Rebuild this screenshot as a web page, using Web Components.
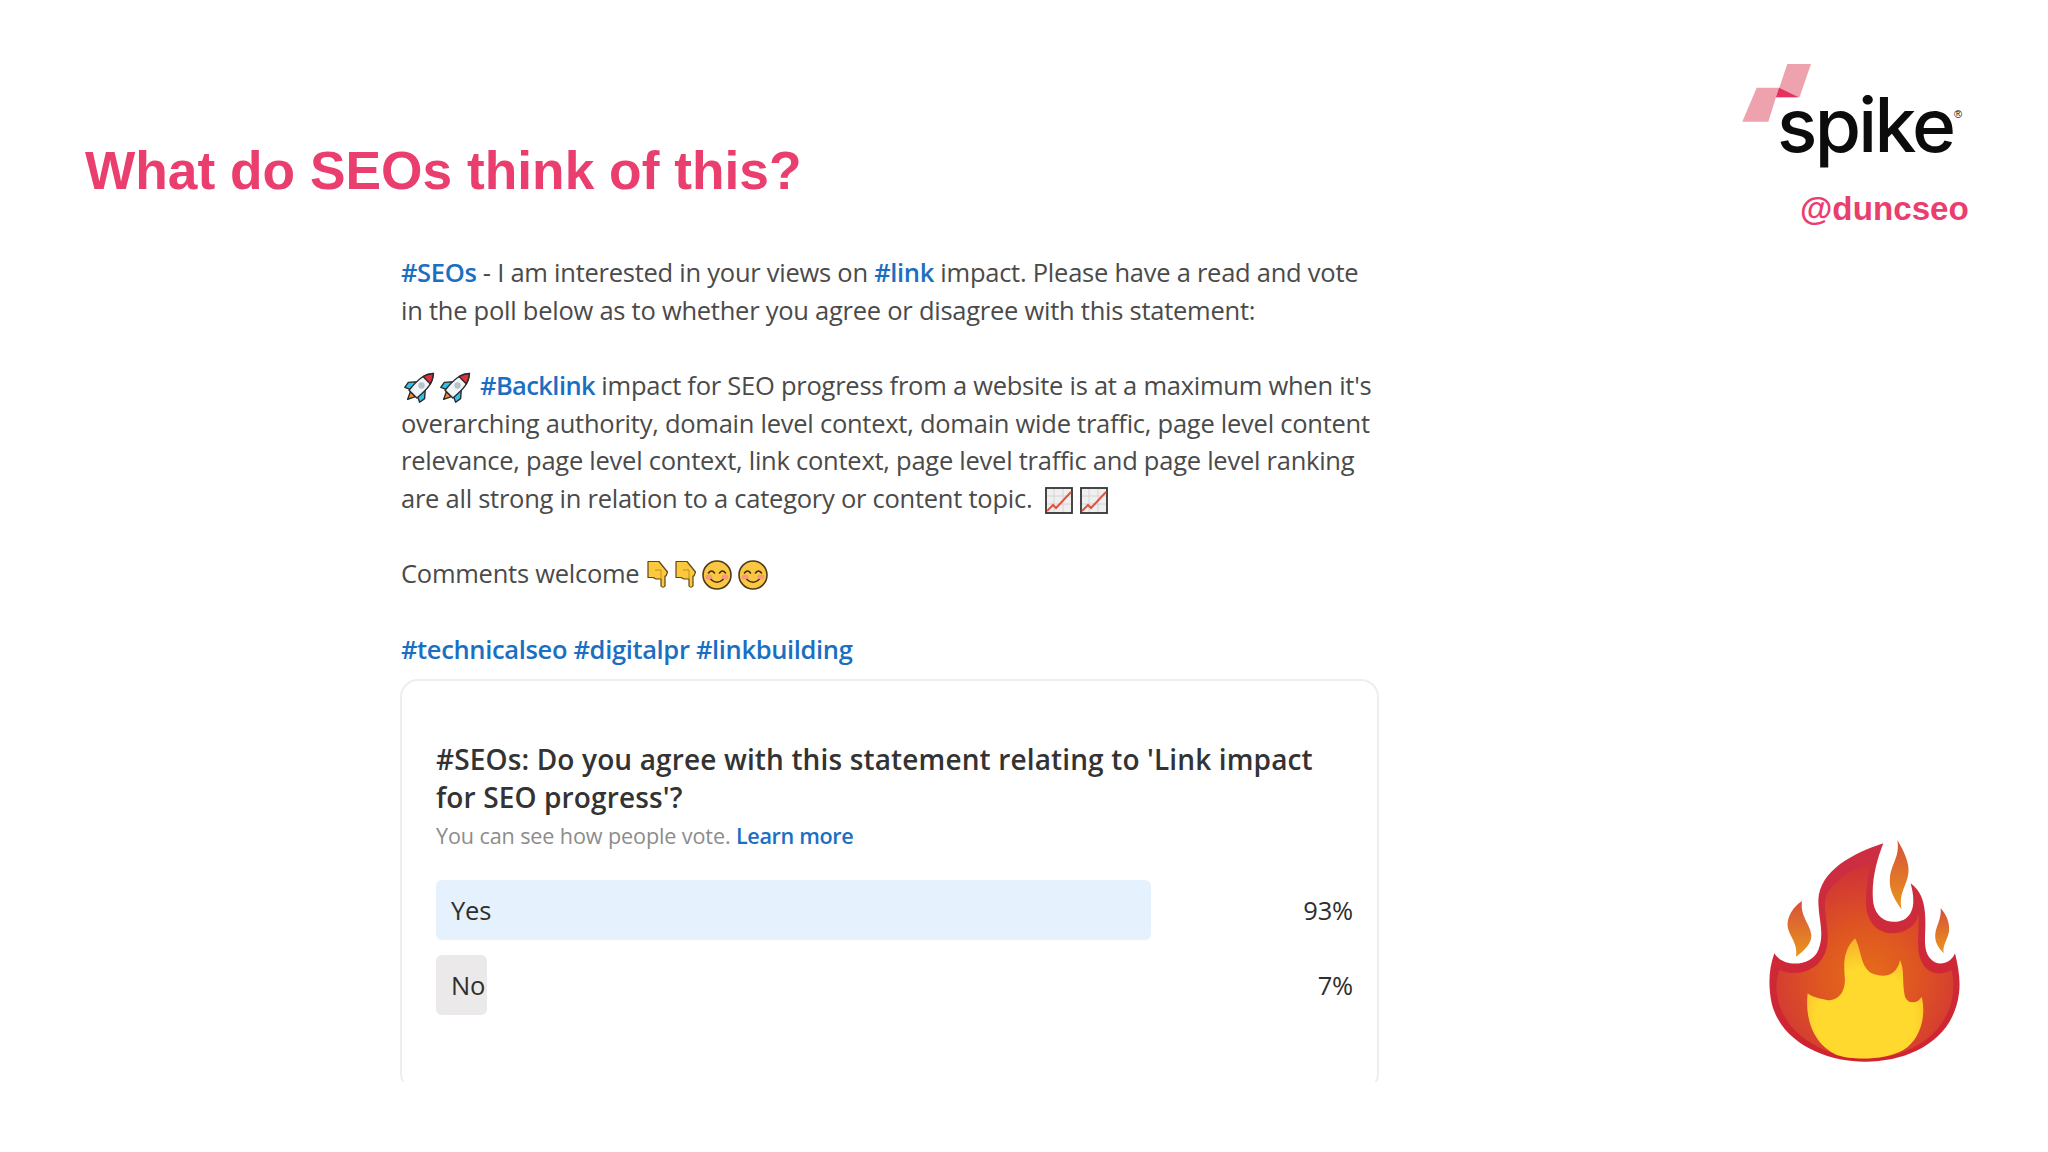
<!DOCTYPE html>
<html>
<head>
<meta charset="utf-8">
<title>What do SEOs think of this?</title>
<style>
	html, body { margin: 0; padding: 0; background: #fff; }
</style>
</head>
<body>
<seo-slide>
	<span slot="title">What do SEOs think of this?</span>
	<spike-brand slot="brand"></spike-brand>
	<seo-post slot="post">
		<hash-tag>#SEOs</hash-tag> - I am interested in your views on <hash-tag>#link</hash-tag> impact. Please have a read and vote<br>
		in the poll below as to whether you agree or disagree with this statement:<br>
		<br>
		<post-emoji name="rocket"></post-emoji><post-emoji name="rocket"></post-emoji><hash-tag class="lead">#Backlink</hash-tag> impact for SEO progress from a website is at a maximum when it's<br>
		overarching authority, domain level context, domain wide traffic, page level content<br>
		relevance, page level context, link context, page level traffic and page level ranking<br>
		are all strong in relation to a category or content topic. <post-emoji name="chart" class="first"></post-emoji><post-emoji name="chart"></post-emoji><br>
		<br>
		Comments welcome <post-emoji name="hand"></post-emoji><post-emoji name="hand"></post-emoji><post-emoji name="smile"></post-emoji><post-emoji name="smile"></post-emoji><br>
		<br>
		<hash-tag>#technicalseo</hash-tag> <hash-tag>#digitalpr</hash-tag> <hash-tag>#linkbuilding</hash-tag>
		<seo-poll slot="poll">
			<span slot="question">#SEOs: Do you agree with this statement relating to 'Link impact<br>for SEO progress'?</span>
			<poll-option label="Yes" percent="93" width="715" tone="win"></poll-option>
			<poll-option label="No" percent="7" width="51" tone="lose"></poll-option>
		</seo-poll>
	</seo-post>
	<fire-emoji slot="flame"></fire-emoji>
</seo-slide>

<script>
class SeoSlide extends HTMLElement {
	constructor() {
		super();
		this.attachShadow({ mode: "open" });
		this.shadowRoot.innerHTML = `
			<style>
				:host { display: block; width: 2048px; height: 1152px; overflow: hidden; background: #fff; }
				.top { display: flex; justify-content: space-between; height: 254px; padding: 0 0 0 85px; }
				.heading {
					margin: 140px 0 0;
					height: 62px;
					font: bold 53.3px/62px "Liberation Sans", Arial, sans-serif;
					color: #ea3e6e;
					white-space: nowrap;
				}
				.main { display: flex; justify-content: space-between; padding-left: 400px; }
				.side { padding: 566px 0 0; }
			</style>
			<div class="top">
				<h1 class="heading"><slot name="title"></slot></h1>
				<slot name="brand"></slot>
			</div>
			<div class="main">
				<slot name="post"></slot>
				<div class="side"><slot name="flame"></slot></div>
			</div>`;
	}
}
customElements.define("seo-slide", SeoSlide);

class SpikeBrand extends HTMLElement {
	constructor() {
		super();
		this.attachShadow({ mode: "open" });
		this.shadowRoot.innerHTML = `
			<style>
				:host { display: block; width: 348px; height: 254px; position: relative; }
				.mark { position: absolute; left: 0; top: 0; }
				.logo {
					padding: 82px 0 0 77px;
					height: 87px;
					font: 500 75px/86px Inter, "Liberation Sans", sans-serif;
					letter-spacing: -2.7px;
					color: #0c0c0c;
				}
				.word { position: relative; display: inline-block; }
				.reg {
					position: absolute;
					left: 177px;
					top: 26px;
					font: 11px/12px "Liberation Sans", sans-serif;
					letter-spacing: 0;
				}
				.handle {
					margin: 0;
					padding: 21px 0 0 100px;
					font: bold 33.2px/38px "Liberation Sans", Arial, sans-serif;
					color: #ea3e6e;
					white-space: nowrap;
				}
			</style>
			<svg class="mark" width="120" height="140" viewBox="0 0 120 140">
				<polygon points="87.3,64 111,64 99.5,97.3 76,97.3" fill="#eea2ae"/>
				<polygon points="56.7,87.7 79,87.7 68.3,121.7 42.3,121.7" fill="#eea2ae"/>
				<polygon points="79,87.7 98.7,97.3 76,97.3" fill="#e8305f"/>
			</svg>
			<div class="logo"><span class="word">spike<span class="reg">®</span></span></div>
			<p class="handle">@duncseo</p>`;
	}
}
customElements.define("spike-brand", SpikeBrand);

class SeoPost extends HTMLElement {
	constructor() {
		super();
		this.attachShadow({ mode: "open" });
		this.shadowRoot.innerHTML = `
			<style>
				:host {
					display: block;
					width: 980px;
					font: 400 25.5px/37.65px "Open Sans", "Noto Sans", sans-serif;
					letter-spacing: -0.25px;
					color: #4a4a4a;
					white-space: nowrap;
				}
				.text { padding-left: 1px; }
				::slotted(seo-poll) { margin-top: 11px; }
			</style>
			<div class="text"><slot></slot></div>
			<slot name="poll"></slot>`;
	}
}
customElements.define("seo-post", SeoPost);

class HashTag extends HTMLElement {
	constructor() {
		super();
		this.attachShadow({ mode: "open" });
		this.shadowRoot.innerHTML = `
			<style>
				:host { display: inline; color: #1b6fc2; font-weight: 600; letter-spacing: -0.35px; }
				:host(.lead) { margin-left: 1px; letter-spacing: -0.6px; }
			</style>
			<slot></slot>`;
	}
}
customElements.define("hash-tag", HashTag);

const EMOJI = {
	rocket: { w: 30, h: 30, before: 4, gap: 2, align: -7, svg: `
		<g transform="rotate(45 15 15)" stroke="#2b2b2b" stroke-width="1.4" stroke-linejoin="round">
			<path d="M11.5 25 L15 32.5 L18.5 25 Z" fill="#f08a2c"/>
			<path d="M9.5 13 L3.5 20 L4.5 26 L11 23 Z" fill="#35c0e8"/>
			<path d="M20.5 13 L26.5 20 L25.5 26 L19 23 Z" fill="#35c0e8"/>
			<path d="M15 -4 C9 3 8 10 9.5 25 H20.5 C22 10 21 3 15 -4 Z" fill="#eef4f7"/>
			<path d="M15 -4 C12.2 -0.6 10.6 2.4 9.8 5.5 H20.2 C19.4 2.4 17.8 -0.6 15 -4 Z" fill="#e0303f"/>
		</g>
		<circle cx="16.5" cy="13.5" r="3.2" fill="#b9c2c8"/>` },
	chart: { w: 28, h: 27, before: 0, gap: 7, align: -6, svg: `
		<rect x="1" y="1" width="26" height="25" fill="#efefef" stroke="#333" stroke-width="1.8"/>
		<path d="M2 9 H26 M2 17 H26 M9 2 V25 M18 2 V25" stroke="#d4d4d4" stroke-width="1"/>
		<path d="M2 24 L8 18 L11 21 L26 5" fill="none" stroke="#e2533f" stroke-width="2"/>` },
	hand: { w: 23, h: 29, before: 0, gap: 5, align: -6, svg: `
		<path d="M2 1.5 H13 L21.5 12 L20 16 H19 V26 Q17 28.5 15 26 V19 H10 L7 17.5 H2 Z" fill="#fcc83e" stroke="#5c4716" stroke-width="1.2" stroke-linejoin="round"/>
		<path d="M9 10 L15 10 L15 19" fill="none" stroke="#c2921f" stroke-width="1"/>` },
	smile: { w: 30, h: 30, before: 0, gap: 6, align: -7, svg: `
		<circle cx="15" cy="15" r="14" fill="#fbc743" stroke="#4c3b18" stroke-width="1.6"/>
		<ellipse cx="7" cy="17" rx="3.6" ry="2.6" fill="#f59a7a"/>
		<ellipse cx="23" cy="17" rx="3.6" ry="2.6" fill="#f59a7a"/>
		<path d="M6.5 13 Q9.5 9 12.5 13 M17.5 13 Q20.5 9 23.5 13 M9 19.5 Q15 25 21 19.5" fill="none" stroke="#3d2f12" stroke-width="1.6" stroke-linecap="round"/>` }
};

class PostEmoji extends HTMLElement {
	constructor() {
		super();
		this.attachShadow({ mode: "open" });
		const e = EMOJI[this.getAttribute("name")];
		this.shadowRoot.innerHTML = `
			<style>
				:host { display: inline-block; width: ${e.w}px; height: ${e.h}px; margin: 0 ${e.gap}px 0 ${e.before}px; vertical-align: ${e.align}px; }
				:host(.first) { margin-left: 6px; }
				svg { display: block; overflow: visible; }
			</style>
			<svg width="${e.w}" height="${e.h}" viewBox="0 0 ${e.w} ${e.h}">${e.svg}</svg>`;
	}
}
customElements.define("post-emoji", PostEmoji);

class SeoPoll extends HTMLElement {
	constructor() {
		super();
		this.attachShadow({ mode: "open" });
		this.shadowRoot.innerHTML = `
			<style>
				:host { display: block; width: 979px; height: 403px; overflow: hidden; }
				.card {
					box-sizing: border-box;
					height: 413px;
					border: 2px solid #efedf0;
					border-radius: 18px;
					padding: 59px 24px 0 34px;
				}
				.question {
					font: 600 28px/38px "Open Sans", "Noto Sans", sans-serif;
					letter-spacing: 0.14px;
					color: #333;
				}
				.note {
					padding-top: 1px;
					font: 400 21.6px/38px "Open Sans", "Noto Sans", sans-serif;
					letter-spacing: -0.12px;
					color: #8c8c8c;
				}
				.note a { color: #1b6fc2; font-weight: 600; letter-spacing: -0.35px; text-decoration: none; }
				.options { display: flex; flex-direction: column; gap: 15px; margin-top: 25px; }
			</style>
			<div class="card">
				<div class="question"><slot name="question"></slot></div>
				<div class="note">You can see how people vote. <a>Learn more</a></div>
				<div class="options"><slot></slot></div>
			</div>`;
	}
}
customElements.define("seo-poll", SeoPoll);

class PollOption extends HTMLElement {
	constructor() {
		super();
		this.attachShadow({ mode: "open" });
		const fill = this.getAttribute("tone") === "win" ? "#e5f1fd" : "#ebe9e9";
		this.shadowRoot.innerHTML = `
			<style>
				:host {
					display: flex;
					justify-content: space-between;
					align-items: center;
					height: 60px;
					font: 400 25.5px/60px "Open Sans", "Noto Sans", sans-serif;
					letter-spacing: -0.2px;
					color: #2f2f2f;
				}
				.bar {
					box-sizing: border-box;
					width: ${this.getAttribute("width")}px;
					height: 60px;
					padding-left: 15px;
					background: ${fill};
					border-radius: 6px;
				}
			</style>
			<div class="bar">${this.getAttribute("label")}</div>
			<div>${this.getAttribute("percent")}%</div>`;
	}
}
customElements.define("poll-option", PollOption);

class FireEmoji extends HTMLElement {
	constructor() {
		super();
		this.attachShadow({ mode: "open" });
		this.shadowRoot.innerHTML = `
			<style>
				:host { display: block; width: 308px; height: 260px; }
				svg { display: block; }
			</style>
			<svg width="240" height="260" viewBox="0 0 720 780">
				<defs>
					<linearGradient id="body" x1="0" y1="0" x2="0" y2="1">
						<stop offset="0" stop-color="#cc2e42"/>
						<stop offset="1" stop-color="#d0242f"/>
					</linearGradient>
					<radialGradient id="mid" gradientUnits="userSpaceOnUse" cx="380" cy="470" r="340">
						<stop offset=".1" stop-color="#e4681a"/>
						<stop offset=".45" stop-color="#de5522"/>
						<stop offset="1" stop-color="#cf3038"/>
					</radialGradient>
					<radialGradient id="core" cx=".5" cy=".68" r=".68">
						<stop offset=".62" stop-color="#ffd92e"/>
						<stop offset="1" stop-color="#f8b02a"/>
					</radialGradient>
					<linearGradient id="lick" x1="0" y1="0" x2="0" y2="1">
						<stop offset="0" stop-color="#d7503a"/>
						<stop offset="1" stop-color="#e9951c"/>
					</linearGradient>
				</defs>
				<path fill="url(#body)" d="M430 70 C340 100 240 150 235 240 C235 300 255 340 235 390 C215 440 130 445 103 400 C85 450 85 500 95 550 C125 670 260 725 375 725 C510 725 640 660 657 520 C662 480 655 440 645 400 C630 435 590 440 570 415 C545 385 560 340 555 280 C552 240 540 210 512 190 C525 240 525 280 490 300 C450 315 410 300 400 250 C392 190 410 120 430 70 Z"/>
				<path fill="url(#mid)" d="M395 125 C330 150 262 190 255 245 C252 300 275 345 255 400 C230 460 160 470 118 450 C105 490 108 520 118 555 C150 655 270 715 375 715 C500 715 620 650 638 525 C642 490 640 470 634 450 C600 470 560 460 545 425 C525 385 540 340 535 280 C530 330 470 350 430 335 C390 320 375 280 378 230 C380 190 385 155 395 125 Z"/>
				<path fill="url(#core)" d="M345 355 C310 390 310 430 315 480 C315 520 290 545 260 540 C235 535 215 530 203 520 C195 590 215 670 290 705 C340 722 440 720 490 690 C540 660 560 590 545 530 C535 550 505 555 495 530 C485 490 495 450 480 420 C470 470 430 475 395 460 C360 440 365 390 345 355 Z"/>
				<path fill="url(#lick)" d="M472 60 C490 90 510 130 505 160 C500 200 475 220 485 268 C465 240 445 210 450 170 C455 130 480 110 472 60 Z"/>
				<path fill="url(#lick)" d="M186 243 C160 260 140 290 143 320 C148 350 175 370 168 410 C195 390 215 370 214 345 C210 310 180 290 186 243 Z"/>
				<path fill="url(#lick)" d="M602 265 C620 285 630 310 627 335 C622 360 605 380 612 400 C595 385 583 365 586 340 C590 315 605 295 602 265 Z"/>
			</svg>`;
	}
}
customElements.define("fire-emoji", FireEmoji);
</script>
</body>
</html>
